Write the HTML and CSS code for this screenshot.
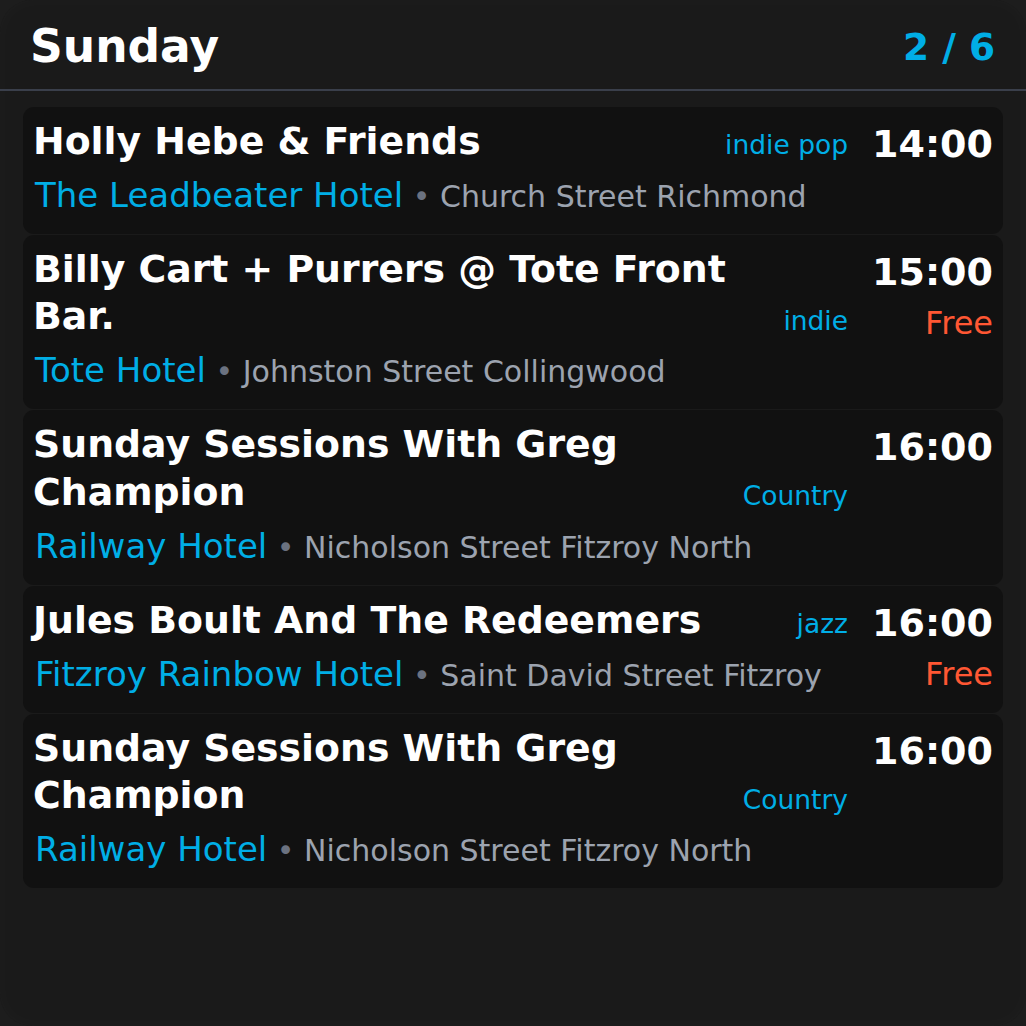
FILE: index.html
```html
<!DOCTYPE html>
<html lang="en">
<head>
<meta charset="utf-8">
<title>Sunday</title>
<link rel="stylesheet" href="styles.css">
</head>
<body>
<div class="frame">
  <header class="top">
    <h1 class="day">Sunday</h1>
    <div class="count">2 / 6</div>
  </header>
  <div class="list">
    <div class="card">
      <div class="title">Holly Hebe &amp; Friends</div>
      <div class="genre">indie pop</div>
      <div class="when"><div class="time">14:00</div></div>
      <div class="where"><span class="venue">The Leadbeater Hotel</span><span class="dot"> • </span><span class="addr">Church Street Richmond</span></div>
    </div>
    <div class="card">
      <div class="title">Billy Cart + Purrers @ Tote Front Bar.</div>
      <div class="genre">indie</div>
      <div class="when"><div class="time">15:00</div><div class="free">Free</div></div>
      <div class="where"><span class="venue">Tote Hotel</span><span class="dot"> • </span><span class="addr">Johnston Street Collingwood</span></div>
    </div>
    <div class="card">
      <div class="title">Sunday Sessions With Greg Champion</div>
      <div class="genre">Country</div>
      <div class="when"><div class="time">16:00</div></div>
      <div class="where"><span class="venue">Railway Hotel</span><span class="dot"> • </span><span class="addr">Nicholson Street Fitzroy North</span></div>
    </div>
    <div class="card">
      <div class="title">Jules Boult And The Redeemers</div>
      <div class="genre">jazz</div>
      <div class="when"><div class="time">16:00</div><div class="free">Free</div></div>
      <div class="where"><span class="venue">Fitzroy Rainbow Hotel</span><span class="dot"> • </span><span class="addr">Saint David Street Fitzroy</span></div>
    </div>
    <div class="card">
      <div class="title">Sunday Sessions With Greg Champion</div>
      <div class="genre">Country</div>
      <div class="when"><div class="time">16:00</div></div>
      <div class="where"><span class="venue">Railway Hotel</span><span class="dot"> • </span><span class="addr">Nicholson Street Fitzroy North</span></div>
    </div>
  </div>
</div>
</body>
</html>
```

FILE: styles.css
```css
html, body {
  margin: 0;
  padding: 0;
  background: #1d1d1d;
}

body {
  font-family: "DejaVu Sans", "Liberation Sans", sans-serif;
  color: #ffffff;
}

.frame {
  width: 1026px;
  height: 1026px;
  box-sizing: border-box;
  background: #1a1a1a;
  border-radius: 32px;
  overflow: hidden;
  box-shadow: inset 0 0 22px rgba(255, 255, 255, 0.025);
}

.top {
  display: flex;
  align-items: center;
  justify-content: space-between;
  padding: 20px 31px 14px 30px;
  border-bottom: 2px solid #3a3f4b;
}

.day {
  margin: 0;
  font-size: 45.5px;
  line-height: 1.2;
  font-weight: bold;
  color: #ffffff;
}

.count {
  font-size: 37.5px;
  line-height: 1.2;
  font-weight: bold;
  color: #00aee6;
}

.list {
  display: flex;
  flex-direction: column;
  gap: 1px;
  padding: 16px 23px;
}

.card {
  display: grid;
  grid-template-columns: 1fr auto auto;
  grid-template-rows: auto auto;
  column-gap: 24px;
  row-gap: 8px;
  padding: 11px 10px 15px 10px;
  background: #111111;
  border-radius: 11px;
}

.title {
  grid-column: 1;
  grid-row: 1;
  font-size: 37.8px;
  line-height: 1.25;
  font-weight: bold;
  color: #ffffff;
}

.genre {
  grid-column: 2;
  grid-row: 1;
  align-self: end;
  padding-bottom: 4px;
  font-size: 26.5px;
  line-height: 1.2;
  color: #00aee6;
  white-space: nowrap;
}

.when {
  grid-column: 3;
  grid-row: 1 / span 2;
  align-self: start;
  margin-top: 3px;
  text-align: right;
}

.time {
  font-size: 38px;
  line-height: 1.25;
  font-weight: bold;
  color: #ffffff;
  white-space: nowrap;
}

.free {
  margin-top: 8px;
  font-size: 32px;
  line-height: 1.2;
  color: #ff5733;
}

.where {
  grid-column: 1 / span 2;
  grid-row: 2;
  padding-left: 2px;
  font-size: 34px;
  line-height: 45px;
  white-space: nowrap;
}

.venue {
  color: #00aee6;
}

.dot {
  font-size: 30px;
  color: #6b7280;
}

.addr {
  font-size: 30px;
  color: #9ca3af;
}
```
